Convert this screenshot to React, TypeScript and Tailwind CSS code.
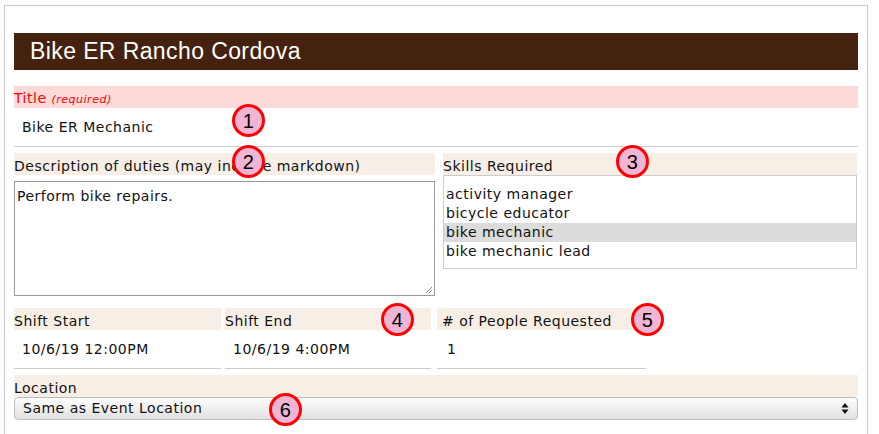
import React from "react";

// ─── Annotation marker ──────────────────────────────────────────────────────

function Marker({ n, x, y }: { n: number; x: number; y: number }) {
    return (
        <div
            className="absolute flex h-[33px] w-[33px] items-center justify-center rounded-full border-[3px] border-[#ff0000] bg-[#f0b5d5] text-[20px] text-black"
            style={{ left: x - 16, top: y - 16, fontFamily: "'Liberation Sans', Arial, sans-serif" }}
        >
            {n}
        </div>
    );
}

function Label({ children, className = "" }: { children: React.ReactNode; className?: string }) {
    return (
        <div className={`flex h-[22px] items-end bg-[#f7efe5] pb-[2px] text-[14px] leading-none text-[#111] ${className}`}>
            {children}
        </div>
    );
}

const skills = ["activity manager", "bicycle educator", "bike mechanic", "bike mechanic lead"];

export default function App() {
    return (
        <div
            className="relative h-[434px] w-[879px] overflow-hidden bg-white tracking-[0.5px]"
            style={{ fontFamily: "'DejaVu Sans', Verdana, sans-serif" }}
        >
            <div className="ml-[4px] mt-[5px] h-[440px] w-[864px] border-x border-t border-[#c8c8c8] px-[9px] pt-[27px]">
                {/* Header */}
                <div
                    className="flex h-[37px] items-center bg-[#45220f] pl-[16px] text-[23px] tracking-[0.4px] text-white"
                    style={{ fontFamily: "'Liberation Sans', Arial, sans-serif" }}
                >
                    Bike ER Rancho Cordova
                </div>

                {/* Title */}
                <div className="mt-[16px] flex h-[22px] items-end bg-[#fddada] pb-[3px] text-[14px] leading-none text-[#ff0000]">
                    Title <span className="ml-[5px] text-[11px] italic">(required)</span>
                </div>
                <div className="flex h-[39px] items-center border-b border-[#cccccc] pl-[8px] text-[14px] text-[#111]">
                    Bike ER Mechanic
                </div>

                {/* Description / skills */}
                <div className="mt-[6px] flex gap-[8px]">
                    <div className="flex w-[421px] flex-col">
                        <Label>Description of duties (may include markdown)</Label>
                        <div className="relative mt-[6px] h-[115px] border border-[#9a9a9a] px-[2px] pt-[4px] text-[14px] text-[#111]">
                            Perform bike repairs.
                            <svg className="absolute bottom-[1px] right-[1px]" width="8" height="8" viewBox="0 0 8 8">
                                <path d="M7 1 L1 7 M7 4 L4 7" stroke="#888" strokeWidth="1" />
                            </svg>
                        </div>
                    </div>
                    <div className="flex w-[414px] flex-col">
                        <Label>Skills Required</Label>
                        <div className="h-[94px] border border-[#cccccc] pt-[9px] text-[14px] text-[#111]">
                            {skills.map((s) => (
                                <div
                                    key={s}
                                    className={`flex h-[19px] items-center pl-[2px] ${s === "bike mechanic" ? "bg-[#dcdcdc]" : ""}`}
                                >
                                    {s}
                                </div>
                            ))}
                        </div>
                    </div>
                </div>

                {/* Shift row */}
                <div className="mt-[12px] flex">
                    <div className="w-[207px]">
                        <Label>Shift Start</Label>
                        <div className="flex h-[39px] items-center border-b border-[#cccccc] pl-[8px] text-[14px] text-[#111]">
                            10/6/19 12:00PM
                        </div>
                    </div>
                    <div className="ml-[4px] w-[206px]">
                        <Label>Shift End</Label>
                        <div className="flex h-[39px] items-center border-b border-[#cccccc] pl-[8px] text-[14px] text-[#111]">
                            10/6/19 4:00PM
                        </div>
                    </div>
                    <div className="ml-[6px] w-[209px]">
                        <Label>&nbsp;# of People Requested</Label>
                        <div className="flex h-[39px] items-center border-b border-[#cccccc] pl-[10px] text-[14px] text-[#111]">
                            1
                        </div>
                    </div>
                </div>

                {/* Location */}
                <Label className="mt-[6px]">Location</Label>
                <div className="flex h-[23px] items-center justify-between rounded-[4px] border border-[#bdbdbd] bg-gradient-to-b from-[#fdfdfd] to-[#e1e1e1] pl-[8px] pr-[8px] text-[14px] text-[#111]">
                    <span>Same as Event Location</span>
                    <svg width="8" height="13" viewBox="0 0 8 13">
                        <path d="M4 1 L7.5 5.5 L0.5 5.5 Z M4 12 L7.5 7.5 L0.5 7.5 Z" fill="#111" />
                    </svg>
                </div>
            </div>

            <Marker n={1} x={248} y={120} />
            <Marker n={2} x={248} y={161} />
            <Marker n={3} x={632} y={161} />
            <Marker n={4} x={397} y={319} />
            <Marker n={5} x={647} y={319} />
            <Marker n={6} x={285} y={409} />
        </div>
    );
}
